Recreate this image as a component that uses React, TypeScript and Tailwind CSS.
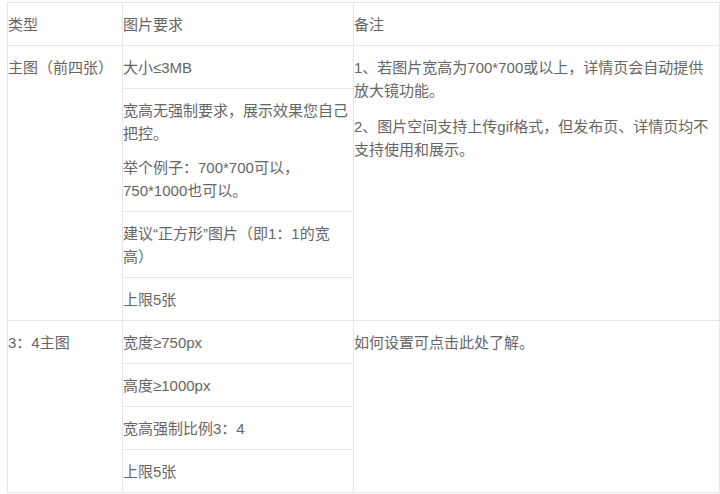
const FONT = "font-['Liberation_Sans','Noto_Sans_CJK_SC',sans-serif]";

const MAIN_ROWS = [
  { text: ["大小≤3MB"] },
  {
    text: ["宽高无强制要求，展示效果您自己把控。", "举个例子：700*700可以，750*1000也可以。"],
  },
  { text: ["建议“正方形”图片（即1：1的宽高）"] },
  { text: ["上限5张"] },
];

const RATIO_ROWS = [
  { text: ["宽度≥750px"] },
  { text: ["高度≥1000px"] },
  { text: ["宽高强制比例3：4"] },
  { text: ["上限5张"] },
];

const cell = "align-top pt-[10px] pb-[9px] pl-0 border border-[#e6e6e6]";

function Group({
  type,
  rows,
  notes,
}: {
  type: string;
  rows: { text: string[] }[];
  notes: string[];
}) {
  return (
    <>
      {rows.map((r, i) => (
        <tr key={i}>
          {i === 0 && (
            <td rowSpan={rows.length} className={cell + " pr-1"}>
              {type}
            </td>
          )}
          <td className={cell + " pr-[2px]"}>
            <div className="flex flex-col gap-[11px]">
              {r.text.map((t, j) => (
                <p key={j}>{t}</p>
              ))}
            </div>
          </td>
          {i === 0 && (
            <td rowSpan={rows.length} className={cell + " pr-[5px]"}>
              <div className="flex flex-col gap-[13px]">
                {notes.map((n, j) => (
                  <p key={j}>{n}</p>
                ))}
              </div>
            </td>
          )}
        </tr>
      ))}
    </>
  );
}

export default function App() {
  return (
    <div className={`w-[720px] h-[494px] bg-white pl-[7px] pt-[2px] ${FONT}`}>
      <table className="table-fixed border-collapse w-[712px] text-[15px] leading-[23px] text-[#666]">
        <colgroup>
          <col className="w-[115px]" />
          <col className="w-[231px]" />
          <col className="w-[366px]" />
        </colgroup>
        <tbody>
          <tr>
            <td className={cell}>类型</td>
            <td className={cell}>图片要求</td>
            <td className={cell}>备注</td>
          </tr>
          <Group
            type="主图（前四张）"
            rows={MAIN_ROWS}
            notes={[
              "1、若图片宽高为700*700或以上，详情页会自动提供放大镜功能。",
              "2、图片空间支持上传gif格式，但发布页、详情页均不支持使用和展示。",
            ]}
          />
          <Group type="3：4主图" rows={RATIO_ROWS} notes={["如何设置可点击此处了解。"]} />
        </tbody>
      </table>
    </div>
  );
}
